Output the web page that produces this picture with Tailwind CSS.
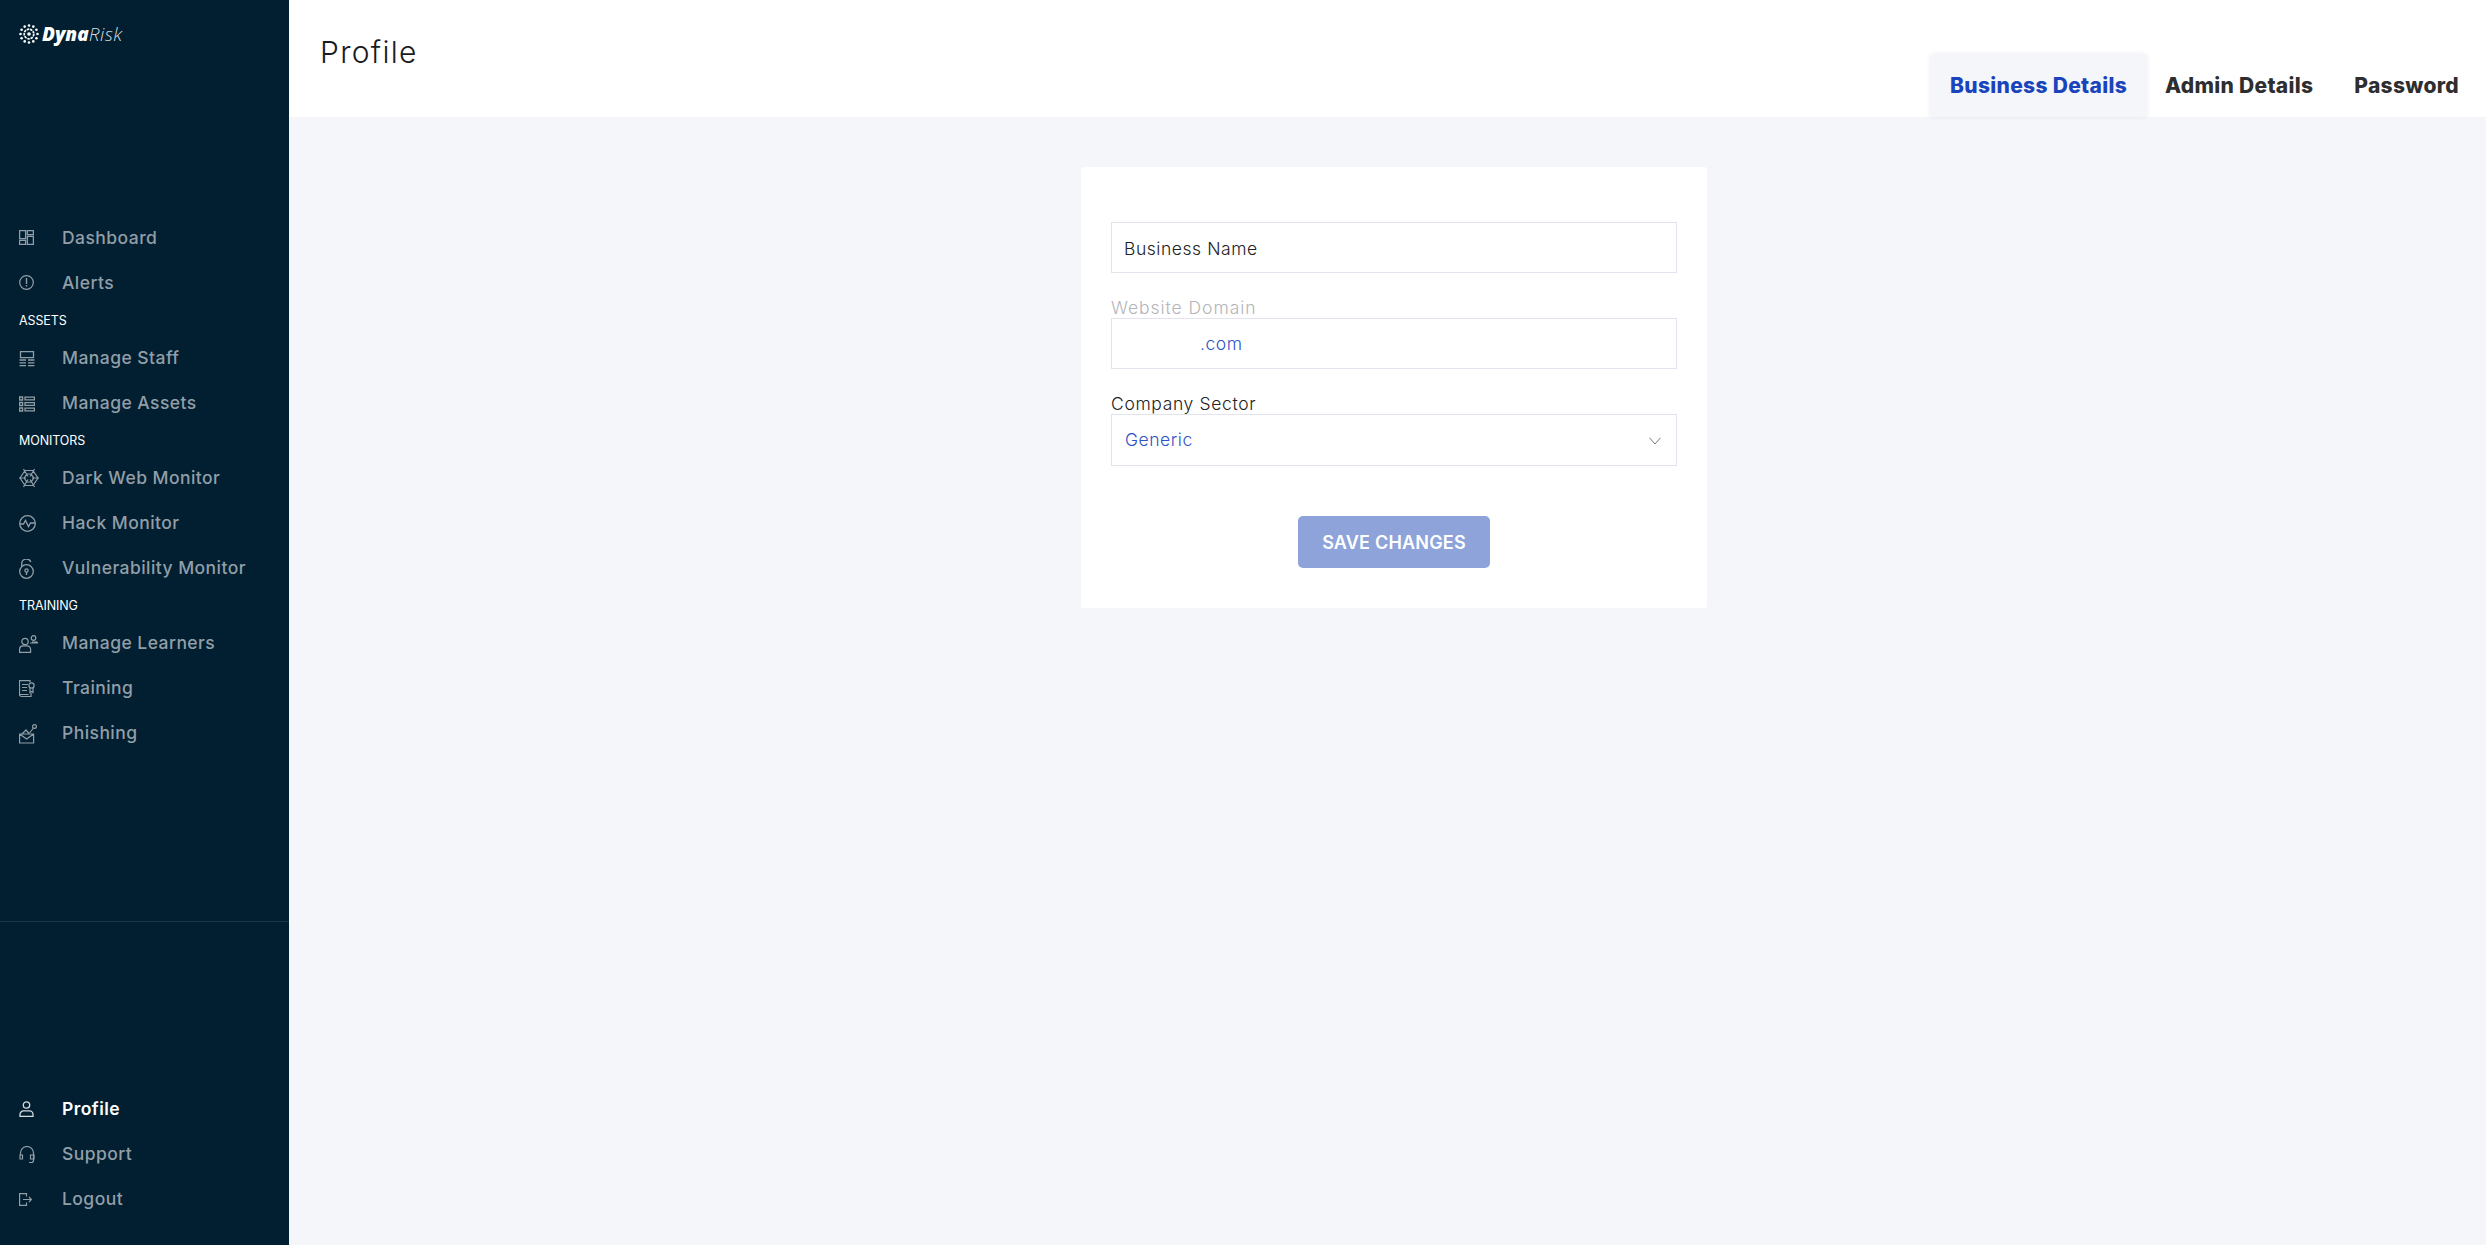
<!DOCTYPE html>
<html lang="en">
<head>
    <meta charset="UTF-8">
    <meta name="viewport" content="width=device-width, initial-scale=1.0">
    <title>Profile</title>
    <script src="https://cdn.jsdelivr.net/npm/@tailwindcss/browser@4"></script>
</head>
<body class="bg-[#f4f6fa] font-['Inter',sans-serif]">
<div class="flex h-[1245px] overflow-hidden">

    <!-- Sidebar -->
    <aside class="w-[289px] shrink-0 bg-[#011f31] flex flex-col text-[#929ea7]">
        <div class="h-[216px] pl-[19px] pt-[21px]">
            <div class="flex items-center h-[26px]">
                <svg class="w-[20px] h-[20px]" viewBox="0 0 20 20" fill="#fff">
                    <circle cx="10" cy="1.5" r="1.3"/><circle cx="14.3" cy="2.6" r="1.3"/><circle cx="17.4" cy="5.7" r="1.3"/><circle cx="18.5" cy="10" r="1.3"/><circle cx="17.4" cy="14.3" r="1.3"/><circle cx="14.3" cy="17.4" r="1.3"/><circle cx="10" cy="18.5" r="1.3"/><circle cx="5.7" cy="17.4" r="1.3"/><circle cx="2.6" cy="14.3" r="1.3"/><circle cx="1.5" cy="10" r="1.3"/><circle cx="2.6" cy="5.7" r="1.3"/><circle cx="5.7" cy="2.6" r="1.3"/>
                    <circle cx="10" cy="10" r="4.8" fill="none" stroke="#fff" stroke-width="1.7" stroke-dasharray="2.5 .8"/>
                    <circle cx="10" cy="10" r="1.8"/>
                </svg>
                <span class="ml-[3px] text-[19px] leading-none italic font-black text-white font-['Open_Sans',sans-serif]">Dyna</span><span class="text-[19px] leading-none italic font-light text-[#d5dade] font-['Open_Sans',sans-serif] tracking-[0.5px]">Risk</span>
            </div>
        </div>

        <nav class="flex flex-col text-[17.5px] tracking-[0.45px] font-medium">
            <a class="h-[45px] flex items-center pl-[19px]">
                <svg class="w-[15px] h-[15px] mr-[28px] -mt-[2px]" viewBox="0 0 15 15" fill="none" stroke="currentColor" stroke-width="1.3"><path d="M.6.6h6v8h-6zM8.4.6h6v4h-6zM.6 10.4h6v4h-6zM8.4 6.400h6v8h-6z"/></svg>
                <span>Dashboard</span>
            </a>
            <a class="h-[45px] flex items-center pl-[19px]">
                <svg class="w-[15px] h-[15px] mr-[28px] -mt-[2px]" viewBox="0 0 15 15" fill="none" stroke="currentColor" stroke-width="1.2"><circle cx="7.5" cy="7.5" r="6.8"/><path d="M7.5 3v6M7.5 10v1.5" stroke-width="1.4"/></svg>
                <span>Alerts</span>
            </a>
            <div class="h-[30px] flex items-center pl-[19px] text-[12.5px] font-normal tracking-[-0.1px] text-white">ASSETS</div>
            <a class="h-[45px] flex items-center pl-[19px]">
                <svg class="w-[16px] h-[16px] mr-[27px]" viewBox="0 0 16 16" fill="none" stroke="currentColor" stroke-width="1.3"><path d="M1.5.6h13v6h-13zM.5 9h6.500M9 9h6.500M.5 11.800h6.500M9 11.800h6.500M.5 14.600h6.500M9 14.600h6.500"/></svg>
                <span>Manage Staff</span>
            </a>
            <a class="h-[45px] flex items-center pl-[19px]">
                <svg class="w-[16px] h-[16px] mr-[27px]" viewBox="0 0 16 16" fill="none" stroke="currentColor" stroke-width="1.3"><path d="M.6 1h3v3h-3zM.6 6.500h3v3h-3zM.6 12h3v3h-3zM6 1.200h9.500v2.600H6zM6 6.700h9.500v2.600H6zM6 12.200h9.500v2.600H6z"/></svg>
                <span>Manage Assets</span>
            </a>
            <div class="h-[30px] flex items-center pl-[19px] text-[12.5px] font-normal tracking-[-0.1px] text-white">MONITORS</div>
            <a class="h-[45px] flex items-center pl-[19px]">
                <svg class="w-[20px] h-[20px] mr-[23px] -mt-[1px]" viewBox="0 0 20 20" fill="none" stroke="currentColor" stroke-width="1.2"><path d="M6 2.500h8l5 7.500-5 7.500H6L1 10zM7.800 6h4.400l2.600 4-2.600 4H7.800l-2.600-4zM4.500 1l4.400 7.500M15.500 1l-4.400 7.500M4.500 19l4.400-7.500M15.500 19l-4.400-7.500M0 10h7M13 10h7"/></svg>
                <span>Dark Web Monitor</span>
            </a>
            <a class="h-[45px] flex items-center pl-[19px]">
                <svg class="w-[17px] h-[17px] mr-[26px] -mt-[1px]" viewBox="0 0 17 17" fill="none" stroke="currentColor" stroke-width="1.3"><circle cx="8.500" cy="8.500" r="7.800"/><path d="M1 9h3.500l2-3.500 3 6 2-3.500H16"/></svg>
                <span>Hack Monitor</span>
            </a>
            <a class="h-[45px] flex items-center pl-[19px]">
                <svg class="w-[15px] h-[20px] mr-[28px]" viewBox="0 0 15 20" fill="none" stroke="currentColor" stroke-width="1.3"><circle cx="7.500" cy="12.500" r="6.800"/><circle cx="7.500" cy="11.500" r="1.600"/><path d="M7.500 13v3M2.700 7.500V5a4.800 4.800 0 0 1 9.200-2"/></svg>
                <span>Vulnerability Monitor</span>
            </a>
            <div class="h-[30px] flex items-center pl-[19px] text-[12.5px] font-normal tracking-[-0.1px] text-white">TRAINING</div>
            <a class="h-[45px] flex items-center pl-[19px]">
                <svg class="w-[19px] h-[18px] mr-[24px]" viewBox="0 0 19 18" fill="none" stroke="currentColor" stroke-width="1.2"><circle cx="6" cy="6.500" r="3.200"/><circle cx="14.500" cy="3" r="2.300"/><path d="M.6 17.400v-3a3.500 3.500 0 0 1 3.500-3.500h4a3.500 3.500 0 0 1 3.500 3.500v3zM11 8h7.500v-.5A2.500 2.500 0 0 0 16 7h-3"/></svg>
                <span>Manage Learners</span>
            </a>
            <a class="h-[45px] flex items-center pl-[19px]">
                <svg class="w-[16px] h-[18px] mr-[27px]" viewBox="0 0 16 18" fill="none" stroke="currentColor" stroke-width="1.2"><path d="M12 13v3.500H2.500a2 2 0 0 1-2-2V.6H11v2M.6 14.500h9M3 4.500h6M3 7.500h5M3 10.500h5"/><circle cx="12.500" cy="5.500" r="2.600"/><path d="M11 8v4.500l1.500-1 1.500 1V8"/></svg>
                <span>Training</span>
            </a>
            <a class="h-[45px] flex items-center pl-[19px]">
                <svg class="w-[18px] h-[20px] mr-[25px]" viewBox="0 0 18 20" fill="none" stroke="currentColor" stroke-width="1.2"><path d="M.6 10v9h14v-9zM.6 10l7 5 7-5M3 10l4-4 3 3.500"/><circle cx="15.500" cy="2.500" r="1.900"/><path d="M14.500 4l-4 5"/></svg>
                <span>Phishing</span>
            </a>
        </nav>

        <div class="mt-[165px] border-t border-white/10"></div>

        <div class="mt-auto pb-[23px] flex flex-col text-[17.5px] tracking-[0.45px] font-medium">
            <a class="h-[45px] flex items-center pl-[19px] text-white font-semibold">
                <svg class="w-[15px] h-[16px] mr-[28px] -mt-[1px] text-[#d5dade]" viewBox="0 0 15 16" fill="none" stroke="currentColor" stroke-width="1.3"><circle cx="7.500" cy="4" r="3.200"/><path d="M1 15.400v-2a3.500 3.500 0 0 1 3.500-3.500h6a3.500 3.500 0 0 1 3.500 3.500v2z"/></svg>
                <span>Profile</span>
            </a>
            <a class="h-[45px] flex items-center pl-[19px]">
                <svg class="w-[16px] h-[17px] mr-[27px] -mt-[1px]" viewBox="0 0 16 17" fill="none" stroke="currentColor" stroke-width="1.2"><path d="M1.500 9V7a6.500 6.500 0 0 1 13 0v7.500a2 2 0 0 1-2 2H10"/><path d="M1 9h2.500v4H1zM11.500 9H15v4h-3.500z"/></svg>
                <span>Support</span>
            </a>
            <a class="h-[45px] flex items-center pl-[19px]">
                <svg class="w-[13px] h-[13px] mr-[30px]" viewBox="0 0 13 13" fill="none" stroke="currentColor" stroke-width="1.2"><path d="M7.500 3.500V.6H.6v11.800h6.900V9.500M4 6.500h8.500M10 4l2.500 2.500L10 9"/></svg>
                <span>Logout</span>
            </a>
        </div>
    </aside>

    <!-- Main -->
    <div class="flex-1 flex flex-col">
        <header class="h-[117px] bg-white flex justify-between pl-[31px] pr-[27px]">
            <h1 class="mt-[32px] text-[30px] leading-[40px] font-light text-[#1b1b1f] tracking-[1.3px]">Profile</h1>
            <div class="flex items-end text-[21px] tracking-[0.3px] font-extrabold text-[#2e2e30]">
                <div class="w-[217px] h-[63px] pt-[1px] bg-[#f4f6fa] rounded-t-[5px] shadow-[0_0_5px_rgba(0,0,0,0.08)] flex items-center justify-center text-[#1a44bb]">Business Details</div>
                <div class="h-[63px] pt-[1px] pl-[18px] pr-[41px] flex items-center">Admin Details</div>
                <div class="h-[63px] pt-[1px] flex items-center">Password</div>
            </div>
        </header>

        <main class="flex justify-center pt-[50px] pl-[13px]">
            <form class="w-[626px] h-[441px] bg-white rounded-[3px] px-[30px] pt-[55px] flex flex-col">
                <div class="h-[51px] border border-[#e2e3ec] flex items-center pl-[12px] pt-[3px] text-[17.5px] tracking-[0.55px] font-light text-[#222]">Business Name</div>
                <label class="mt-[20px] h-[25px] pt-[2px] text-[17.5px] leading-[25px] tracking-[0.95px] font-light text-[#b4b4b8]">Website Domain</label>
                <div class="h-[51px] border border-[#e2e3ec] flex items-center pl-[88px] pt-[1px] text-[17.5px] tracking-[0.55px] font-light text-[#2d52c8]">.com</div>
                <label class="mt-[20px] h-[25px] pt-[2px] text-[17.5px] leading-[25px] tracking-[0.65px] font-light text-[#222]">Company Sector</label>
                <div class="h-[52px] border border-[#e2e3ec] flex items-center justify-between pl-[13px] pr-[15px] text-[17.5px] tracking-[0.55px] font-light text-[#2d52c8]">
                    <span>Generic</span>
                    <svg class="w-[12px] h-[8px] mt-[2px]" viewBox="0 0 12 8" fill="none" stroke="#77777d" stroke-width="1"><path d="M.5.8 6 7 11.500.8"/></svg>
                </div>
                <button type="button" class="self-center mt-[50px] w-[192px] h-[52px] rounded-[5px] bg-[#8da3da] text-white text-[18px] tracking-[0.2px] font-semibold">SAVE CHANGES</button>
            </form>
        </main>
    </div>
</div>
</body>
</html>
